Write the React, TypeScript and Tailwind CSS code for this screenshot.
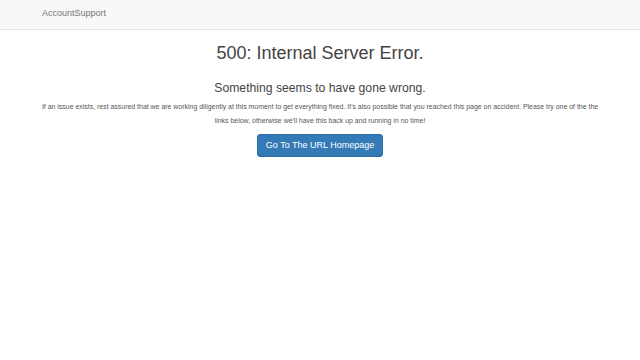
export default function App() {
  return (
    <div className="min-h-[360px] bg-white" style={{ fontFamily: '"Liberation Sans", Arial, sans-serif' }}>
      <div className="h-[30px] bg-[#f8f8f8] border-b border-[#e7e7e7] flex items-center">
        <div className="pl-[42px] text-[9px] text-[#777] mt-[-1px]">AccountSupport</div>
      </div>
      <div className="px-[38px] text-center">
        <h1 className="text-[18px] leading-[22px] mt-[12px] text-[#444]">500: Internal Server Error.</h1>
        <h3 className="text-[12.2px] leading-[16px] mt-[16px] text-[#444]">Something seems to have gone wrong.</h3>
        <p className="text-[6.95px] leading-[14px] mt-[4px] text-[#555]">
          If an issue exists, rest assured that we are working diligently at this moment to get everything fixed. It's also possible that you reached this page on accident. Please try one of the the links below, otherwise we'll have this back up and running in no time!
        </p>
        <div className="mt-[6px] flex justify-center">
          <button className="h-[23px] px-[8px] bg-[#337ab7] border border-[#2e6da4] rounded-[3px] text-white text-[9px]">Go To The URL Homepage</button>
        </div>
      </div>
    </div>
  );
}
